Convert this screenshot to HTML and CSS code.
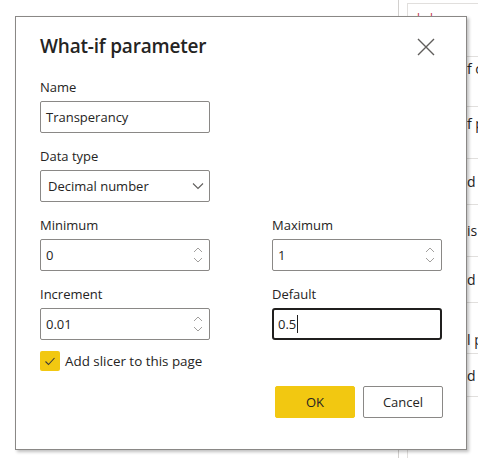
FILE: index.html
```html
<!DOCTYPE html>
<html>
<head>
<meta charset="utf-8">
<link rel="stylesheet" href="styles.css">
</head>
<body>
<div class="backdrop">
  <div class="bg-blank"></div>
  <div class="bg-divider"></div>
  <div class="bg-panel">
    <div class="bg-head"><span class="bg-mark">ł</span><span class="bg-mark">ł</span></div>
    <div class="bg-row r1"><span>f c</span></div>
    <div class="bg-row r2"><span>f p</span></div>
    <div class="bg-row r3"><span>d</span></div>
    <div class="bg-row r4"><span>is</span></div>
    <div class="bg-row r5"><span>d</span></div>
    <div class="bg-row r6"><span>l p</span></div>
    <div class="bg-row r7"><span>d</span></div>
  </div>
</div>

<div class="dialog">
  <div class="dialog-head">
    <h1 class="title">What-if parameter</h1>
    <svg class="close" width="18" height="18" viewBox="0 0 18 18"><path d="M1 1 L17 17 M17 1 L1 17" stroke="#605e5c" stroke-width="1.4" fill="none"/></svg>
  </div>

  <div class="field">
    <div class="label">Name</div>
    <div class="input"><span class="val">Transperancy</span></div>
  </div>

  <div class="field">
    <div class="label">Data type</div>
    <div class="input select"><span class="val">Decimal number</span>
      <svg class="chev" width="12" height="8" viewBox="0 0 12 8"><path d="M1 1.5 L6 6.5 L11 1.5" stroke="#605e5c" stroke-width="1.1" fill="none"/></svg>
    </div>
  </div>

  <div class="grid">
    <div class="field">
      <div class="label">Minimum</div>
      <div class="input"><span class="val">0</span>
        <svg class="spin" width="10" height="20" viewBox="0 0 10 20"><path d="M1 7 L5 3 L9 7 M1 13 L5 17 L9 13" stroke="#a19f9d" stroke-width="1" fill="none"/></svg>
      </div>
    </div>
    <div class="field">
      <div class="label">Maximum</div>
      <div class="input"><span class="val">1</span>
        <svg class="spin" width="10" height="20" viewBox="0 0 10 20"><path d="M1 7 L5 3 L9 7 M1 13 L5 17 L9 13" stroke="#a19f9d" stroke-width="1" fill="none"/></svg>
      </div>
    </div>
    <div class="field">
      <div class="label">Increment</div>
      <div class="input"><span class="val">0.01</span>
        <svg class="spin" width="10" height="20" viewBox="0 0 10 20"><path d="M1 7 L5 3 L9 7 M1 13 L5 17 L9 13" stroke="#a19f9d" stroke-width="1" fill="none"/></svg>
      </div>
    </div>
    <div class="field">
      <div class="label">Default</div>
      <div class="input focused"><span class="val">0.5</span><span class="caret"></span></div>
    </div>
  </div>

  <div class="check-row">
    <span class="checkbox">
      <svg width="14" height="14" viewBox="0 0 14 14"><path d="M2.5 7.5 L5.5 10.5 L11.5 4" stroke="#3b3a39" stroke-width="1.1" fill="none"/></svg>
    </span>
    <span class="check-label">Add slicer to this page</span>
  </div>

  <div class="actions">
    <button class="btn primary">OK</button>
    <button class="btn">Cancel</button>
  </div>
</div>
</body>
</html>
```

FILE: styles.css
```css
* { box-sizing: border-box; }
html, body { margin: 0; padding: 0; }
body {
  width: 478px;
  height: 458px;
  overflow: hidden;
  background: #ffffff;
  font-family: "Open Sans", "Noto Sans", sans-serif;
  color: #252423;
  position: relative;
}

/* background page */
.backdrop {
  display: flex;
  height: 458px;
}
.bg-blank { width: 398px; flex: none; }
.bg-divider { width: 1px; background: #d2d0ce; flex: none; }
.bg-panel {
  margin-left: 8px;
  margin-top: 3px;
  flex: 1;
  min-width: 0;
  border-left: 1px solid #e1dfdd;
  border-top: 1px solid #e1dfdd;
  white-space: nowrap;
}
.bg-head {
  height: 53px;
  border-bottom: 1px solid #e1dfdd;
  padding: 6px 0 0 9px;
  display: flex;
  gap: 10px;
  color: #c4314b;
  font-size: 12px;
}
.bg-row {
  border-bottom: 1px solid #e1dfdd;
  font-size: 14px;
  color: #252423;
  padding-left: 59px;
  display: flex;
  align-items: center;
  white-space: nowrap;
}
.r1 { height: 50px; align-items: flex-start; padding-top: 2px; }
.r2 { height: 52px; align-items: flex-start; padding-top: 7px; }
.r3 { height: 46px; }
.r4 { height: 52px; }
.r5 { height: 46px; }
.r6 { height: 51px; align-items: flex-end; padding-bottom: 4px; }
.r7 { height: 43px; }

/* dialog (overlay) */
.dialog {
  position: absolute;
  left: 15px;
  top: 16px;
  width: 452px;
  height: 434px;
  background: #ffffff;
  border: 1px solid #8a8886;
  box-shadow: 2px 2px 3px rgba(0,0,0,0.25);
  padding: 14px 23px 0 24px;
}
.dialog-head {
  display: flex;
  justify-content: space-between;
  align-items: center;
  height: 30px;
  margin-bottom: 16px;
}
.title {
  margin: 0;
  font-size: 19px;
  font-weight: 600;
  letter-spacing: -0.2px;
  line-height: 28px;
}
.close { margin-right: 8px; margin-top: 2px; }

.field {
  display: flex;
  flex-direction: column;
  gap: 4px;
  width: 170px;
  margin-bottom: 13px;
}
.label {
  font-size: 13px;
  line-height: 20px;
}
.input {
  height: 32px;
  border: 1px solid #8a8886;
  border-radius: 2px;
  display: flex;
  align-items: center;
  justify-content: space-between;
  padding: 0 6px 0 5px;
  font-size: 13px;
}
.input .val { line-height: 20px; }
.select { padding-left: 7px; padding-right: 5px; }
.focused {
  border: 2px solid #201f1e;
  border-radius: 3px;
  justify-content: flex-start;
  padding-left: 4px;
}
.caret {
  width: 1px;
  height: 18px;
  background: #201f1e;
  margin-left: 1px;
}

.grid {
  display: grid;
  grid-template-columns: 170px 170px;
  column-gap: 62px;
}

.check-row {
  display: flex;
  align-items: center;
  gap: 5px;
  margin-top: -2px;
  height: 20px;
}
.checkbox {
  width: 20px;
  height: 20px;
  border-radius: 2px;
  background: #f2c811;
  display: flex;
  align-items: center;
  justify-content: center;
}
.check-label { font-size: 13.4px; }

.actions {
  display: flex;
  justify-content: flex-end;
  gap: 8px;
  margin-top: 15px;
}
.btn {
  width: 80px;
  height: 32px;
  border: 1px solid #8a8886;
  border-radius: 2px;
  background: #ffffff;
  font-family: "Open Sans", "Noto Sans", sans-serif;
  font-size: 13px;
  color: #252423;
  padding: 0;
}
.btn.primary {
  background: #f2c811;
  border-color: #f2c811;
}
```
